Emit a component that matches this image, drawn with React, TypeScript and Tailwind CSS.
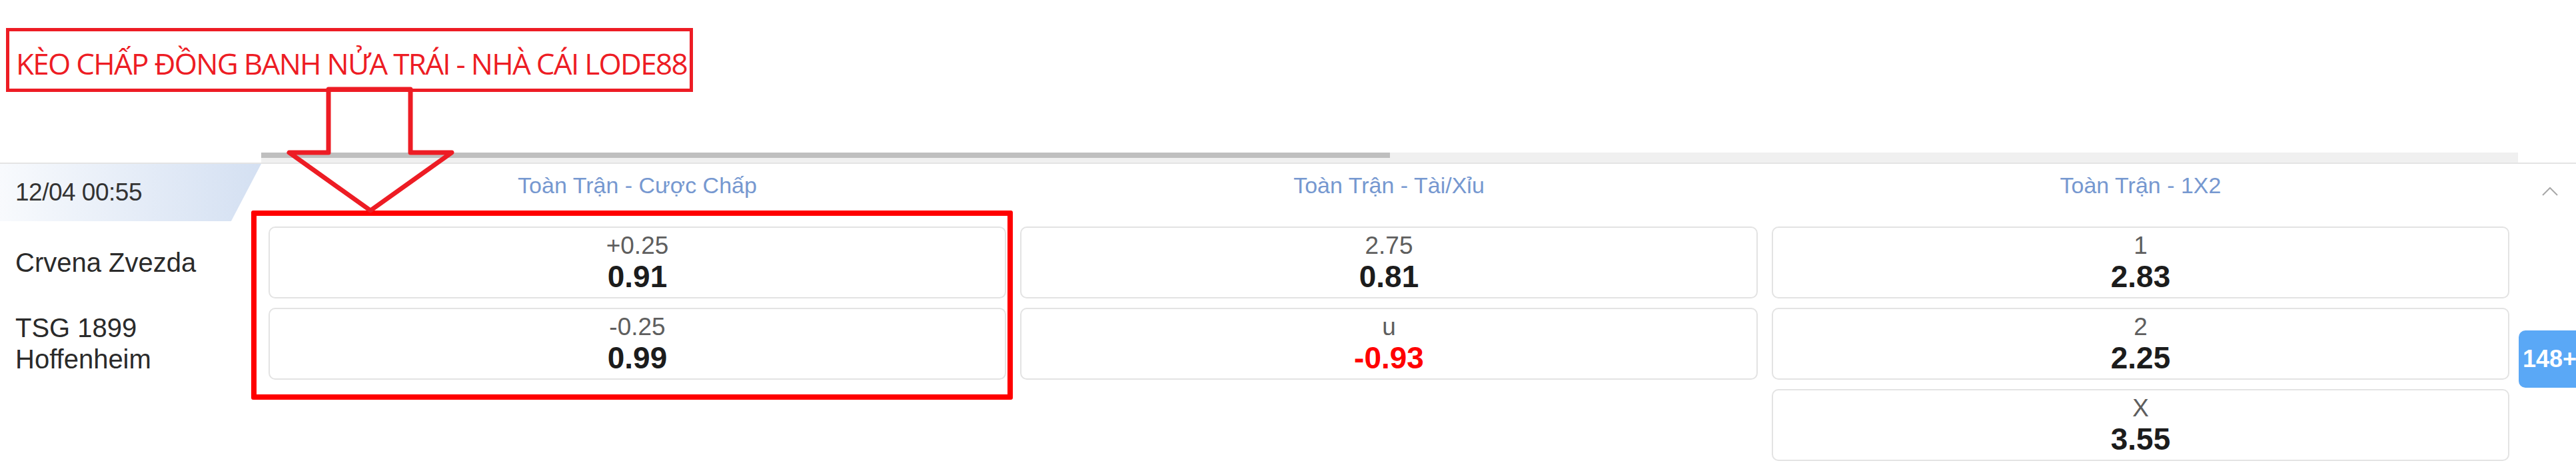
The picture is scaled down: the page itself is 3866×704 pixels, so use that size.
import React from 'react';

type Odd = { label: string; value: string; red?: boolean };

const columns: { title: string; odds: Odd[] }[] = [
  {
    title: 'Toàn Trận - Cược Chấp',
    odds: [
      { label: '+0.25', value: '0.91' },
      { label: '-0.25', value: '0.99' },
    ],
  },
  {
    title: 'Toàn Trận - Tài/Xỉu',
    odds: [
      { label: '2.75', value: '0.81' },
      { label: 'u', value: '-0.93', red: true },
    ],
  },
  {
    title: 'Toàn Trận - 1X2',
    odds: [
      { label: '1', value: '2.83' },
      { label: '2', value: '2.25' },
      { label: 'X', value: '3.55' },
    ],
  },
];

const OddCell: React.FC<{ odd: Odd }> = ({ odd }) => (
  <div className="h-[108px] rounded-[10px] border-2 border-[#e3e3e3] bg-white flex flex-col items-center justify-center">
    <span className="text-[37px] leading-[42px] text-[#5e5e5e]">{odd.label}</span>
    <span className={`text-[46px] leading-[50px] font-bold ${odd.red ? 'text-[#ff0000]' : 'text-[#1c1c1c]'}`}>
      {odd.value}
    </span>
  </div>
);

export default function App() {
  return (
    <div className="relative w-[3866px] h-[704px] overflow-hidden bg-white font-['Liberation_Sans',Arial,sans-serif]">
      {/* annotation label */}
      <div className="ml-[9px] mt-[42px] w-[1031px] h-[96px] border-[5px] border-[#ed1c24] flex items-center pl-[10px] pt-[9px]">
        <span className="font-['Open_Sans',sans-serif] text-[44px] tracking-[-1.7px] leading-none text-[#ed1c24] whitespace-nowrap">
          KÈO CHẤP ĐỒNG BANH NỬA TRÁI - NHÀ CÁI LODE88
        </span>
      </div>

      {/* scrollbar */}
      <div className="mt-[91px] ml-[392px] w-[3387px] h-[15px] bg-[#f0f0f0]">
        <div className="w-[1694px] h-[8px] bg-[#bfbfbf]" />
      </div>
      <div className="h-[2px] bg-[#e4e4e4]" />

      {/* odds table */}
      <div className="grid grid-cols-[382px_1107px_1107px_1107px_1fr] grid-rows-[80px_108px_108px_108px] gap-x-[21px] gap-y-[14px]">
        <div className="relative">
          <div className="w-[392px] h-[86px] bg-gradient-to-r from-[#f8fafd] to-[#d4e0f2] [clip-path:polygon(0_0,100%_0,88.5%_100%,0_100%)] flex items-center pl-[23px]">
            <span className="text-[37px] tracking-[-0.5px] text-[#333]">12/04 00:55</span>
          </div>
        </div>
        {columns.map((c) => (
          <div key={c.title} className="text-center pt-[12px] text-[34px] leading-[40px] text-[#7698d0]">
            {c.title}
          </div>
        ))}
        <div className="pt-[34px] pl-[28px]">
          <svg width="24" height="14" viewBox="0 0 24 14" fill="none" stroke="#a8a8a8" strokeWidth="2">
            <path d="M1 13 L12 2 L23 13" />
          </svg>
        </div>

        <div className="flex items-center pl-[23px] text-[40px] leading-[47px] text-[#2a2a2a]">Crvena Zvezda</div>
        <OddCell odd={columns[0].odds[0]} />
        <OddCell odd={columns[1].odds[0]} />
        <OddCell odd={columns[2].odds[0]} />
        <div />

        <div className="flex items-center pl-[23px] text-[40px] leading-[47px] text-[#2a2a2a]">TSG 1899 Hoffenheim</div>
        <OddCell odd={columns[0].odds[1]} />
        <OddCell odd={columns[1].odds[1]} />
        <OddCell odd={columns[2].odds[1]} />
        <div className="relative">
          <div className="absolute left-[-7px] top-[34px] w-[100px] h-[86px] rounded-l-[10px] bg-[#5aa8f6] flex items-center pl-[6px] text-[36px] font-bold text-white">
            148+
          </div>
        </div>

        <div />
        <div />
        <div />
        <OddCell odd={columns[2].odds[2]} />
        <div />
      </div>

      {/* red highlight around handicap column */}
      <div className="absolute left-[377px] top-[316px] w-[1143px] h-[284px] border-[8px] border-[#ff0000] rounded-[3px]" />

      {/* arrow */}
      <svg className="absolute left-0 top-0" width="720" height="340" viewBox="0 0 720 340" fill="none">
        <polygon
          points="493,134 616,134 616,229 678,229 556,316 434,229 493,229"
          stroke="#ed1c24"
          strokeWidth="7"
          strokeLinejoin="round"
        />
      </svg>
    </div>
  );
}
